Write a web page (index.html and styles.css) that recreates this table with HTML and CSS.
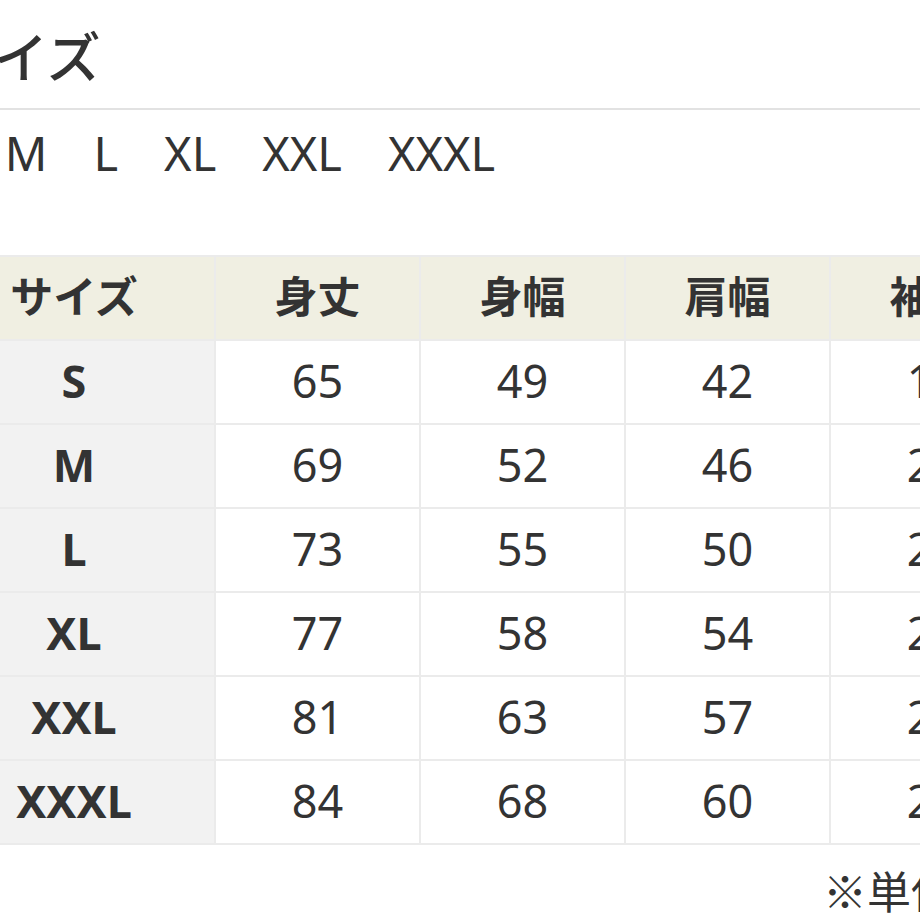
FILE: index.html
```html
<!DOCTYPE html>
<html lang="ja">
<head>
<meta charset="utf-8">
<title>サイズ</title>
<link rel="stylesheet" href="styles.css">
</head>
<body>
<div class="page">
  <h1 class="title">サイズ</h1>
  <ul class="sizes">
    <li>S</li><li>M</li><li>L</li><li>XL</li><li>XXL</li><li>XXXL</li>
  </ul>
  <table class="chart">
    <thead>
      <tr><th class="c-size">サイズ</th><th>身丈</th><th>身幅</th><th>肩幅</th><th>袖丈</th></tr>
    </thead>
    <tbody>
      <tr><th>S</th><td>65</td><td>49</td><td>42</td><td>19</td></tr>
      <tr><th>M</th><td>69</td><td>52</td><td>46</td><td>20</td></tr>
      <tr><th>L</th><td>73</td><td>55</td><td>50</td><td>22</td></tr>
      <tr><th>XL</th><td>77</td><td>58</td><td>54</td><td>22</td></tr>
      <tr><th>XXL</th><td>81</td><td>63</td><td>57</td><td>24</td></tr>
      <tr><th>XXXL</th><td>84</td><td>68</td><td>60</td><td>24</td></tr>
    </tbody>
  </table>
  <p class="note">※単位：cm</p>
</div>
</body>
</html>
```
FILE: styles.css
```css
html, body {
  margin: 0;
  padding: 0;
  overflow: hidden;
  background: #fff;
}
body {
  font-family: "Noto Sans", "Noto Sans CJK JP", sans-serif;
  color: #333;
}
.page {
  margin-left: -68px;
  width: 1120px;
}
.title {
  margin: 28px 0 0 0;
  padding: 0 0 26px 8px;
  font-size: 54px;
  line-height: 54px;
  font-weight: 500;
  font-family: "Noto Sans CJK JP", sans-serif;
  border-bottom: 2px solid #e2e2e2;
}
.sizes {
  list-style: none;
  margin: 20px 0 0 1px;
  padding: 0;
  display: flex;
  gap: 46px;
  font-size: 47px;
  line-height: 47px;
}
.chart {
  margin-top: 78px;
  border-collapse: collapse;
  table-layout: fixed;
}
.chart th, .chart td {
  border: 2px solid #ebebeb;
  width: 203px;
  height: 78px;
  padding: 0 0 4px 0;
  text-align: center;
  vertical-align: middle;
  font-size: 45px;
  line-height: 1;
}
.chart td {
  font-weight: 400;
}
.chart thead th {
  background: #f0efe2;
  font-family: "Noto Sans CJK JP", sans-serif;
  font-weight: 700;
  font-size: 43px;
  height: 74px;
  padding-bottom: 8px;
}
.chart .c-size {
  width: 280px;
}
.chart tbody th {
  background: #f2f2f2;
  font-weight: 700;
}
.note {
  margin: 15px 0 0 0;
  padding-left: 891px;
  font-size: 44px;
  line-height: 60px;
  font-family: "Noto Sans CJK JP", sans-serif;
  white-space: nowrap;
}
```
